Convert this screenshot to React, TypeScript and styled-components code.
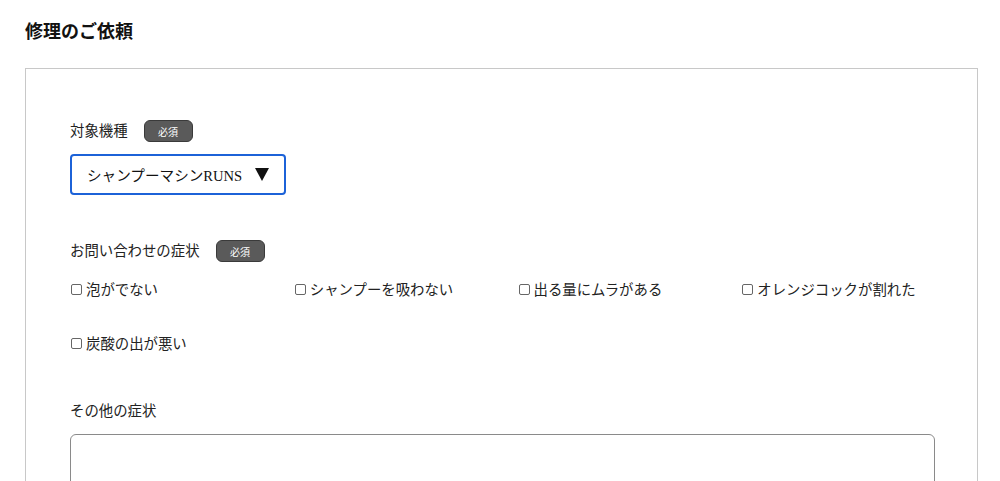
import React from "react";
import styled, { createGlobalStyle } from "styled-components";

const Global = createGlobalStyle`
  html, body { margin: 0; padding: 0; overflow: hidden; background: #fff; }
  body {
    font-family: "Liberation Serif", "Noto Sans CJK JP", serif;
    color: #222;
  }
`;

const Page = styled.div`
  padding: 0 22px 0 25px;
`;

const Title = styled.h1`
  margin: 0;
  padding-top: 20px;
  height: 68px;
  box-sizing: border-box;
  font-size: 18px;
  line-height: 24px;
  font-weight: bold;
  color: #111;
`;

const Card = styled.div`
  border: 1px solid #c8c8c8;
  padding: 51px 42px 40px 44px;
`;

const Section = styled.section<{ $gapAfter: number }>`
  margin-bottom: ${(p) => p.$gapAfter}px;
`;

const LabelRow = styled.div<{ $gap: number }>`
  display: flex;
  align-items: center;
  gap: 16px;
  height: 22px;
  margin-bottom: ${(p) => p.$gap}px;
`;

const Label = styled.span`
  font-size: 14.4px;
  line-height: 20px;
  color: #222;
`;

const Badge = styled.span`
  display: inline-flex;
  align-items: center;
  justify-content: center;
  width: 49px;
  height: 22px;
  box-sizing: border-box;
  background: #5a5a5a;
  border: 1px solid #3a3a3a;
  border-radius: 6px;
  color: #fff;
  font-size: 10px;
`;

const SelectBox = styled.div`
  display: inline-flex;
  align-items: center;
  width: 216px;
  height: 41px;
  box-sizing: border-box;
  border: 2px solid #1c62d8;
  border-radius: 4px;
  padding: 0 15px 0 15px;
  font-size: 14.6px;
  color: #111;
`;

const SelectText = styled.span`
  flex: 1;
  white-space: nowrap;
`;

const Arrow = styled.span`
  width: 0;
  height: 0;
  border-left: 7px solid transparent;
  border-right: 7px solid transparent;
  border-top: 13px solid #111;
`;

const CheckGrid = styled.div`
  display: grid;
  grid-template-columns: repeat(4, 1fr);
  column-gap: 30px;
  row-gap: 34px;
`;

const CheckItem = styled.label`
  display: flex;
  align-items: center;
  gap: 4px;
  height: 20px;
  font-size: 14.4px;
  color: #222;
  white-space: nowrap;
`;

const Box = styled.input`
  appearance: none;
  margin: 2px 0 0 1px;
  width: 11px;
  height: 11px;
  box-sizing: border-box;
  border: 1px solid #666;
  border-radius: 2px;
  background: #fff;
`;

const TextArea = styled.textarea`
  display: block;
  width: 100%;
  height: 120px;
  box-sizing: border-box;
  border: 1px solid #8a8a8a;
  border-radius: 6px;
  resize: none;
  font-family: inherit;
`;

const symptoms = [
  "泡がでない",
  "シャンプーを吸わない",
  "出る量にムラがある",
  "オレンジコックが割れた",
  "炭酸の出が悪い",
];

export default function App() {
  return (
    <>
      <Global />
      <Page>
        <Title>修理のご依頼</Title>
        <Card>
          <Section $gapAfter={45}>
            <LabelRow $gap={12}>
              <Label>対象機種</Label>
              <Badge>必須</Badge>
            </LabelRow>
            <SelectBox>
              <SelectText>シャンプーマシンRUNS</SelectText>
              <Arrow />
            </SelectBox>
          </Section>
          <Section $gapAfter={48}>
            <LabelRow $gap={16}>
              <Label>お問い合わせの症状</Label>
              <Badge>必須</Badge>
            </LabelRow>
            <CheckGrid>
              {symptoms.map((s) => (
                <CheckItem key={s}>
                  <Box type="checkbox" />
                  {s}
                </CheckItem>
              ))}
            </CheckGrid>
          </Section>
          <Section $gapAfter={0}>
            <LabelRow $gap={12}>
              <Label>その他の症状</Label>
            </LabelRow>
            <TextArea />
          </Section>
        </Card>
      </Page>
    </>
  );
}
